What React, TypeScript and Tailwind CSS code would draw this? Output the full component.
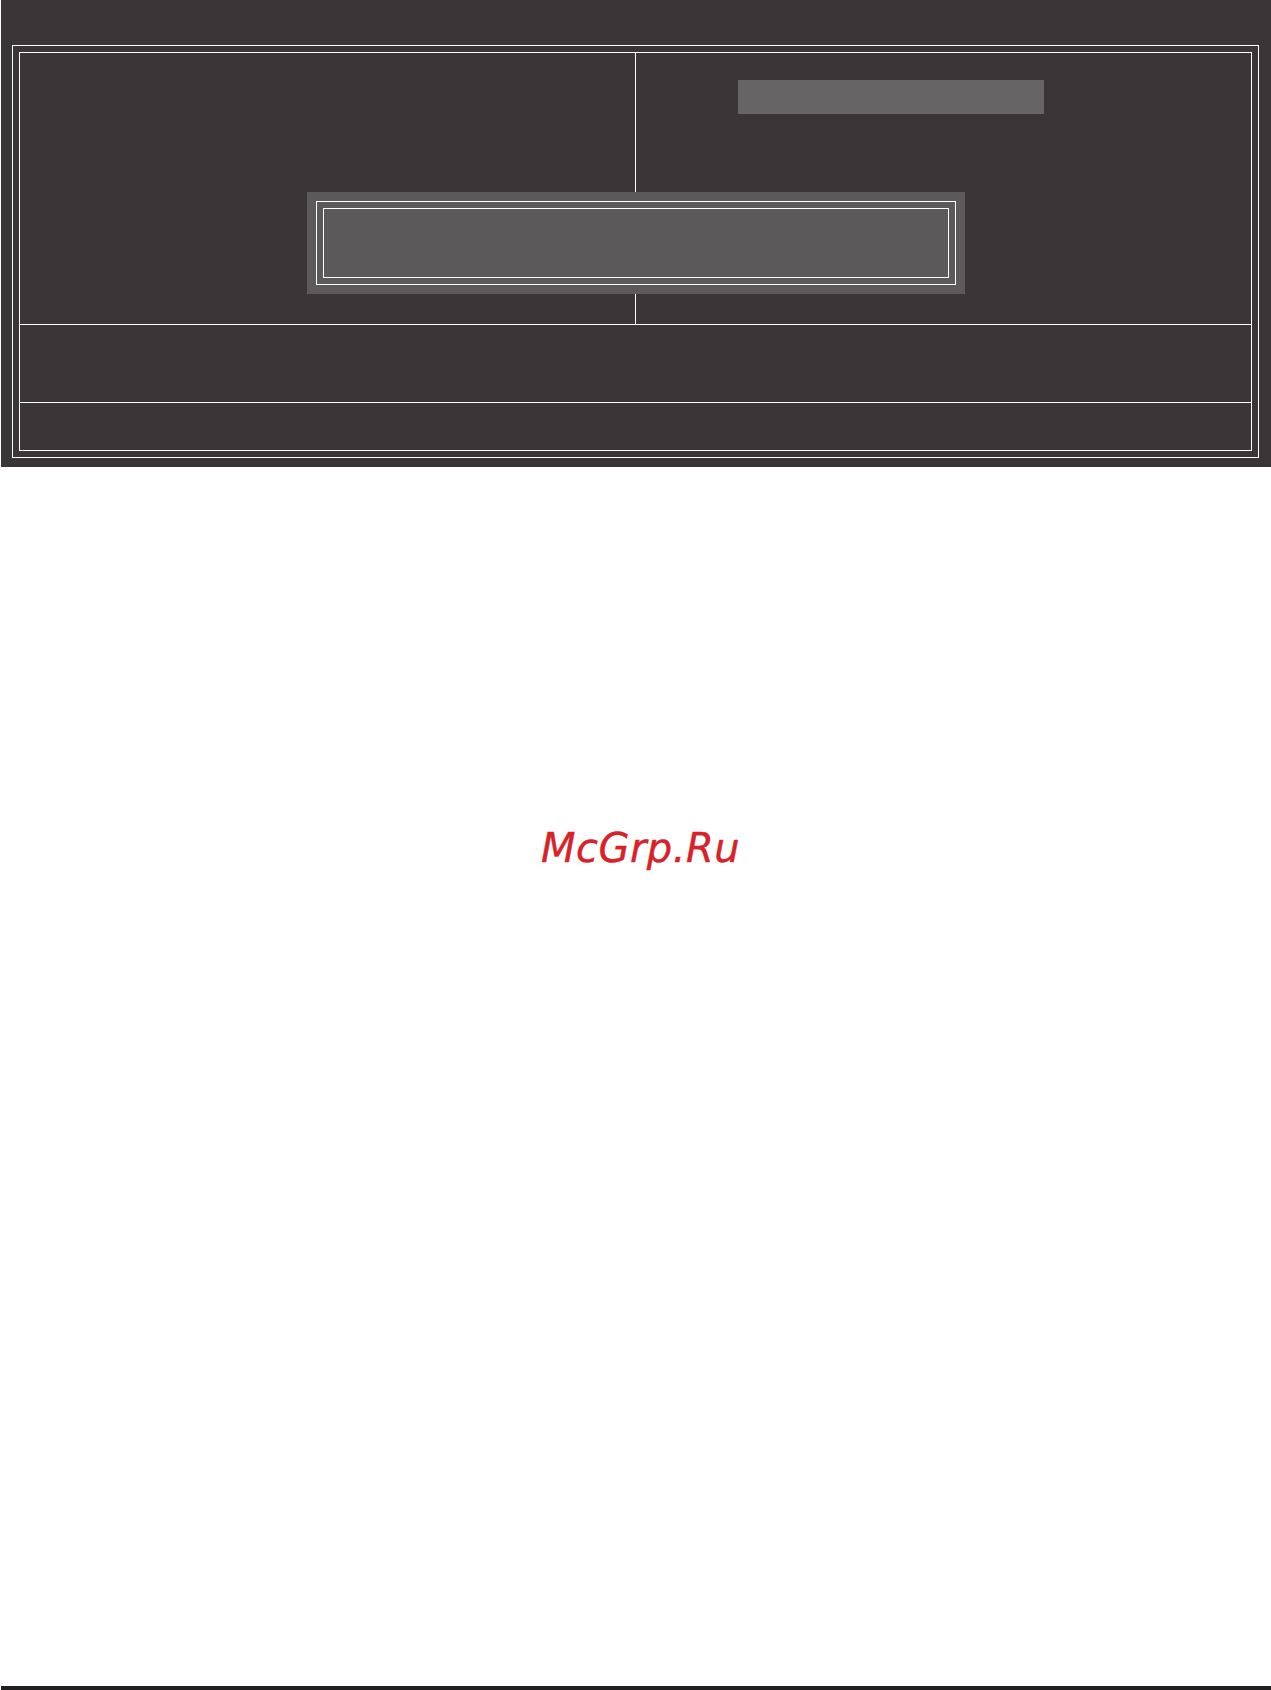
import React from "react";

function SetupFrame() {
  return (
    <div className="ml-[1px] h-[467px] bg-[#3a3637] pt-[45px] pl-[11px] pr-[12px] pb-[9px]">
      <div className="h-full border border-white p-[6px]">
        <div className="relative flex h-full flex-col border border-white">
          {/* main area: item list | help column */}
          <div className="flex h-[272px] border-b border-white">
            <div className="w-[616px] border-r border-white" />
            <div className="flex-1 pl-[102px] pt-[27px]">
              <div className="h-[34px] w-[306px] bg-[#666465]" />
            </div>
          </div>
          <div className="h-[78px] border-b border-white" />
          <div className="flex-1" />

          {/* dialog over the frame */}
          <div className="absolute left-[287px] top-[139px] h-[102px] w-[658px] bg-[#5b595a] p-[9px]">
            <div className="h-full border border-white p-[6px]">
              <div className="h-full border-[1.5px] border-white" />
            </div>
          </div>
        </div>
      </div>
    </div>
  );
}

export default function App() {
  return (
    <div className="flex h-[1690px] w-[1271px] flex-col bg-white">
      <SetupFrame />
      <div className="mt-[361px] flex justify-center pl-[10px]">
        <span
          className="text-[40px] italic leading-none tracking-[0.5px] text-[#d62228]"
          style={{ fontFamily: '"DejaVu Sans", Verdana, sans-serif', WebkitTextStroke: "0.4px #d62228" }}
        >
          McGrp.Ru
        </span>
      </div>
      <div className="mt-auto ml-[1px] h-[4px] bg-[#231f20]" />
    </div>
  );
}
